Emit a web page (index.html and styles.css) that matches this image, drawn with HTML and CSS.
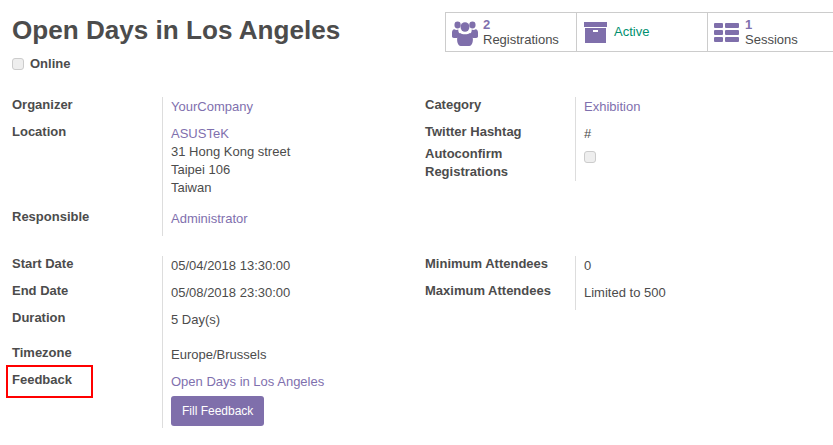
FILE: index.html
```html
<!DOCTYPE html>
<html lang="en">
<head>
    <meta charset="UTF-8">
    <title>Open Days in Los Angeles</title>
    <link rel="stylesheet" href="styles.css">
</head>
<body>
    <div class="sheet">
        <header class="top">
            <div class="title-block">
                <h1>Open Days in Los Angeles</h1>
                <div class="online"><span class="check"></span><span class="online-label">Online</span></div>
            </div>
            <div class="stats">
                <div class="stat">
                    <svg class="icon users" width="26" height="25" viewBox="0 0 28 25" preserveAspectRatio="none">
                        <circle cx="6" cy="4" r="3.400"/>
                        <circle cx="22" cy="4" r="3.400"/>
                        <circle cx="14" cy="6" r="4.800"/>
                        <path d="M0 11.500c0-2 1-3.300 2.500-3.300 1.200 1 3.200 1 4.300.3-.2 2 .7 3.700 2 4.800-1.300.8-2.400 2-2.800 3.700H2c-1.200 0-2-.7-2-1.700z"/>
                        <path d="M28 11.500c0-2-1-3.300-2.500-3.300-1.200 1-3.200 1-4.300.3.200 2-.7 3.700-2 4.800 1.300.8 2.400 2 2.800 3.700H26c1.200 0 2-.7 2-1.700z"/>
                        <path d="M8.800 12c1.400 1.700 8.900 1.700 10.400 0 2.200.3 3.300 2.700 3.300 6.600 0 3.400-1.500 6.400-3.800 6.400H9.300c-2.300 0-3.800-3-3.800-6.400 0-3.900 1.100-6.300 3.300-6.600z"/>
                    </svg>
                    <div class="stat-text"><span class="stat-num">2</span><span>Registrations</span></div>
                </div>
                <div class="stat">
                    <svg class="icon archive" width="23" height="21" viewBox="0 0 23 21">
                        <path d="M0 0h23v5H0z"/>
                        <path fill-rule="evenodd" d="M1 6h21v15H1zM9 8h5v2H9z"/>
                    </svg>
                    <div class="stat-text stat-active">Active</div>
                </div>
                <div class="stat">
                    <svg class="icon tasks" width="26" height="19" viewBox="0 0 26 19">
                        <rect width="9" height="5" rx="1"/>
                        <rect x="11" width="14" height="5" rx="1"/>
                        <rect y="7" width="9" height="5" rx="1"/>
                        <rect x="11" y="7" width="14" height="5" rx="1"/>
                        <rect y="14" width="9" height="5" rx="1"/>
                        <rect x="11" y="14" width="14" height="5" rx="1"/>
                    </svg>
                    <div class="stat-text"><span class="stat-num">1</span><span>Sessions</span></div>
                </div>
            </div>
        </header>

        <section class="columns first">
            <div class="group">
                <div class="label">Organizer</div>
                <div class="value"><a href="#">YourCompany</a></div>
                <div class="label">Location</div>
                <div class="value address">
                    <a href="#">ASUSTeK</a><br>31 Hong Kong street<br>Taipei 106<br>Taiwan
                </div>
                <div class="label">Responsible</div>
                <div class="value"><a href="#">Administrator</a></div>
            </div>
            <div class="group">
                <div class="label">Category</div>
                <div class="value"><a href="#">Exhibition</a></div>
                <div class="label">Twitter Hashtag</div>
                <div class="value short">#</div>
                <div class="label wrap">Autoconfirm Registrations</div>
                <div class="value tick"><span class="check"></span></div>
            </div>
        </section>

        <section class="columns second">
            <div class="group">
                <div class="label">Start Date</div>
                <div class="value">05/04/2018 13:30:00</div>
                <div class="label">End Date</div>
                <div class="value">05/08/2018 23:30:00</div>
                <div class="label">Duration</div>
                <div class="value long">5 Day(s)</div>
                <div class="label">Timezone</div>
                <div class="value">Europe/Brussels</div>
                <div class="label">Feedback</div>
                <div class="value feedback">
                    <a href="#">Open Days in Los Angeles</a>
                    <button class="btn">Fill Feedback</button>
                </div>
            </div>
            <div class="group">
                <div class="label">Minimum Attendees</div>
                <div class="value">0</div>
                <div class="label">Maximum Attendees</div>
                <div class="value">Limited to 500</div>
            </div>
        </section>

        <div class="highlight"></div>
    </div>
</body>
</html>
```

FILE: styles.css
```css
* {
    box-sizing: border-box;
}

html, body {
    margin: 0;
    padding: 0;
    height: 445px;
    overflow: hidden;
    background: #fff;
}

body {
    font-family: 'Liberation Sans', Arial, sans-serif;
    font-size: 13px;
    line-height: 18px;
    color: #4c4c4c;
}

a {
    color: #7f70ae;
    text-decoration: none;
}

.sheet {
    position: relative;
    width: 838px;
    padding: 12px 0 0 12px;
}

.top {
    display: flex;
    justify-content: space-between;
    height: 84px;
    margin-bottom: 1px;
}

h1 {
    margin: 0;
    font-size: 26.1px;
    line-height: 36px;
    font-weight: bold;
}

.online {
    display: flex;
    align-items: center;
    gap: 6px;
    margin-top: 7px;
}

.online-label {
    font-weight: bold;
}

.check {
    display: block;
    width: 12px;
    height: 12px;
    border: 1px solid #ccc;
    border-radius: 3px;
    background: #eee;
}

.stats {
    display: flex;
    height: 40px;
    border-top: 1px solid #ccc;
    border-bottom: 1px solid #ccc;
}

.stat {
    display: flex;
    align-items: center;
    width: 131px;
    padding-left: 6px;
    border-left: 1px solid #ccc;
}

.stat .icon {
    flex: none;
    fill: #7f6fab;
}

.stat .users {
    margin-top: 3px;
}

.stat .archive {
    margin-left: 1px;
    margin-top: 1px;
}

.stat .tasks {
    margin-top: 1px;
}

.stat-text {
    display: flex;
    flex-direction: column;
    margin-left: 5px;
    line-height: 15px;
}

.stat-num {
    font-weight: bold;
    color: #7f70ae;
}

.stat-active {
    margin-left: 7px;
    margin-bottom: 2px;
    color: #00906f;
}

.columns {
    display: grid;
    grid-template-columns: 413px 1fr;
}

.second {
    margin-top: 20px;
}

.group {
    display: grid;
    grid-template-columns: 150px 263px;
    align-content: start;
}

.label {
    font-weight: bold;
    line-height: 16px;
}

.label.wrap {
    width: 110px;
    line-height: 18px;
}

.value {
    padding: 1px 0 8px 8px;
    border-left: 1px solid #ddd;
}

.address {
    padding-bottom: 12px;
}

.short {
    padding-bottom: 2px;
}

.tick {
    padding-top: 6px;
    padding-bottom: 9px;
}

.long {
    padding-bottom: 16px;
}

.feedback {
    padding-bottom: 2px;
}

.btn {
    display: block;
    height: 30px;
    margin-top: 5px;
    padding: 0 11px;
    border: 0;
    border-radius: 3px;
    background: #7f6fab;
    color: #fff;
    font-family: inherit;
    font-size: 12px;
}

.highlight {
    position: absolute;
    left: 6px;
    top: 365px;
    width: 87px;
    height: 33px;
    border: 2px solid #f00;
}
```
